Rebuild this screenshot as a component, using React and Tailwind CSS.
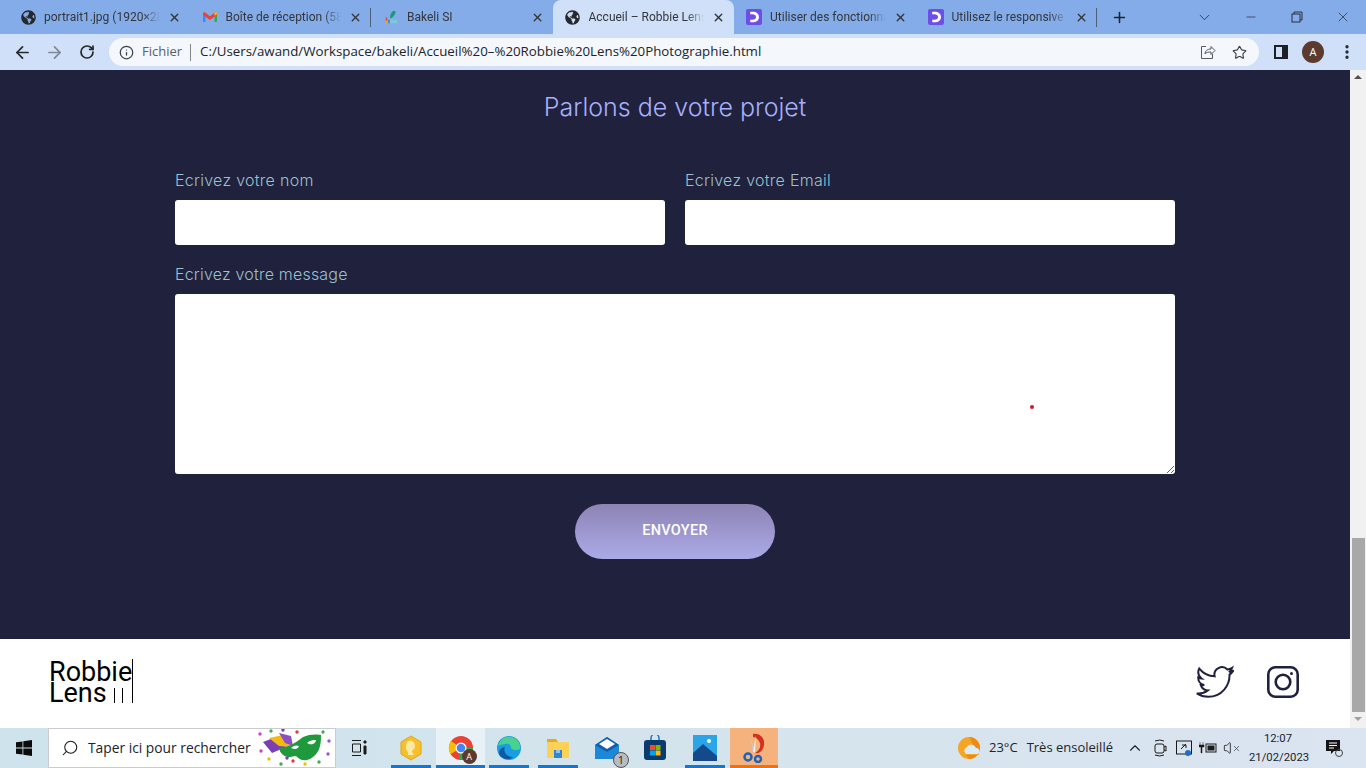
import React from "react";
import {
  ArrowLeft,
  ArrowRight,
  ChevronDown,
  ChevronUp,
  Info,
  Minus,
  MoreVertical,
  Plus,
  RotateCw,
  Search,
  Star,
  Volume,
  X,
} from "lucide-react";
import { FaGlobeAmericas } from "react-icons/fa";

const Dlogo = () => (
  <svg width="16" height="16" viewBox="0 0 16 16">
    <rect width="16" height="16" rx="2" fill="#6d4ee8" />
    <path d="M4 3c5-1.200 9 1 9 5s-4 6.200-9 5l.5-2.500c3 .8 5.500-.2 5.500-2.500S7.500 4.700 4.500 5.500z" fill="#fff" />
  </svg>
);

const Gmail = () => (
  <svg width="16" height="16" viewBox="0 0 16 16">
    <path d="M1 4v9h2.500V7z" fill="#4285f4" />
    <path d="M15 4v9h-2.500V7z" fill="#34a853" />
    <path d="M1 4l1.500-1L8 7.200 13.500 3 15 4v2l-7 5-7-5z" fill="#ea4335" />
    <path d="M12.500 7L15 5V3.500L13.500 3l-1 .8z" fill="#fbbc04" />
  </svg>
);

const Bakeli = () => (
  <svg width="18" height="18" viewBox="0 0 18 18">
    <path d="M8 10c0-4 2-8 5-8 2 0 1 4-1 6s-2 3-4 2z" fill="#1a9a7a" />
    <path d="M3 9c1.500 0 2 1 2 3v2H3z" fill="#e94b3c" />
    <path d="M3 13h2v3H3z" fill="#f5a623" />
    <path d="M6 12h1.500v4H6z" fill="#3b6fd4" />
    <rect x="8" y="12" width="8" height="4" fill="#7fc8d8" />
  </svg>
);

const Globe = () => <FaGlobeAmericas size={15} className="text-[#26282c]" />;

const tabs = [
  { title: "portrait1.jpg (1920×2880)", icon: <Globe /> },
  { title: "Boîte de réception (58)", icon: <Gmail />, sep: true },
  { title: "Bakeli SI", icon: <Bakeli /> },
  { title: "Accueil – Robbie Lens Photographie", icon: <Globe />, active: true },
  { title: "Utiliser des fonctionnalités", icon: <Dlogo /> },
  { title: "Utilisez le responsive design", icon: <Dlogo />, sep: true },
];

const Tab = ({ tab }) => (
  <div
    className={`relative flex items-center w-[181.5px] h-[34px] pl-3 pr-[9px] gap-2 shrink-0 ${
      tab.active ? "bg-[#cfe0f8] rounded-t-lg" : ""
    }`}
  >
    <span className="w-4 h-4 flex items-center justify-center shrink-0">{tab.icon}</span>
    <span className="flex-1 overflow-hidden whitespace-nowrap font-['Roboto',sans-serif] text-xs text-[#33363b] [mask-image:linear-gradient(to_right,black_85%,transparent)]">
      {tab.title}
    </span>
    <X size={13} strokeWidth={2.5} className="text-[#33363b] shrink-0" />
    {tab.sep && <span className="absolute right-0 top-2 w-px h-[19px] bg-[#4f5f78]" />}
  </div>
);

const Chrome = () => (
  <svg width="26" height="26" viewBox="0 0 26 26">
    <circle cx="13" cy="13" r="12" fill="#ea4335" />
    <path d="M13 13L2.600 19A12 12 0 0 1 3 6z" fill="#fbbc04" />
    <path d="M13 13h12a12 12 0 0 1-12 12l-2-1z" fill="#34a853" />
    <circle cx="13" cy="13" r="5.500" fill="#fff" />
    <circle cx="13" cy="13" r="4.300" fill="#4285f4" />
  </svg>
);

const Edge = () => (
  <svg width="26" height="26" viewBox="0 0 26 26">
    <circle cx="13" cy="13" r="12" fill="#1b9de2" />
    <path d="M2 11C4 3 12 0 18 3c5 2 7 8 6 11-3 2-8 1-9-1 0-3-2-5-6-4-3 .5-5 1-7 2z" fill="#48d18f" />
    <path d="M9 12c-2 4 1 10 8 10-4 4-10 2-13-1-2-3-1-8 5-9z" fill="#0c59a4" />
  </svg>
);

const Folder = () => (
  <svg width="24" height="24" viewBox="0 0 24 24">
    <path d="M1 3h9l2 3H1z" fill="#e8a820" />
    <rect x="1" y="6" width="22" height="16" fill="#fbd257" />
    <rect x="8" y="14" width="8" height="8" fill="#2f86d4" />
    <rect x="10" y="14" width="4" height="3" fill="#8cc4f0" />
  </svg>
);

const Mail = () => (
  <div className="relative w-[26px] h-[24px]">
    <svg width="26" height="24" viewBox="0 0 26 24">
      <path d="M1 9l12-8 12 8v14H1z" fill="#1e88d8" />
      <path d="M1 9l12 7 12-7-12-8z" fill="#0f5fae" />
      <path d="M5 8l8-5 8 5-8 5z" fill="#fff" />
    </svg>
    <span className="absolute -right-[9px] -bottom-[8px] w-4 h-4 rounded-full bg-[#b8bcc0] border border-[#555] text-[11px] leading-[14px] text-center text-[#222]">
      1
    </span>
  </div>
);

const Store = () => (
  <svg width="24" height="26" viewBox="0 0 24 26">
    <path d="M8 6V3a4 4 0 0 1 8 0v3" fill="none" stroke="#1c78c8" strokeWidth="1.500" />
    <rect x="1" y="5" width="22" height="20" rx="3" fill="#0d3a6e" />
    <rect x="7" y="10" width="5" height="5" fill="#f25022" />
    <rect x="12.500" y="10" width="5" height="5" fill="#7fba00" />
    <rect x="7" y="15.500" width="5" height="5" fill="#00a4ef" />
    <rect x="12.500" y="15.500" width="5" height="5" fill="#ffb900" />
  </svg>
);

const Photos = () => (
  <svg width="24" height="26" viewBox="0 0 24 26">
    <rect width="24" height="26" fill="#2aa6e8" />
    <path d="M0 26V18l10-9 14 12v5z" fill="#124a8c" />
    <circle cx="16" cy="6" r="2" fill="#fff" />
  </svg>
);

const Snip = () => (
  <svg width="26" height="30" viewBox="0 0 26 30">
    <path d="M12 1c7-1 12 4 11 11s-6 9-9 8c4-2 6-6 5-10-1-3-4-6-7-6z" fill="#d0321e" />
    <path d="M9 4l5 14-2 1z" fill="#c8c8c8" />
    <path d="M15 2l-3 17 2 .5z" fill="#eee" />
    <circle cx="7" cy="24" r="3.500" fill="none" stroke="#1f62b5" strokeWidth="2.500" />
    <circle cx="17" cy="26" r="3" fill="none" stroke="#1f62b5" strokeWidth="2.500" />
  </svg>
);

const Coin = () => (
  <svg width="24" height="26" viewBox="0 0 24 26">
    <path d="M12 1l10 6v12l-10 6-10-6V7z" fill="#f6c02c" stroke="#e6a410" />
    <path d="M8 7c4-3 8 0 8 4s-3 3-3 6l2 3H9c1-3-2-4-2-7 0-2 0-4 1-6z" fill="#fde9a6" />
  </svg>
);

const Mask = () => (
  <svg width="76" height="38" viewBox="0 0 76 38">
    <path d="M6 13l13-5 10 10-14 6z" fill="#7b3fb5" />
    <path d="M12 9l14-3 8 12-12-1z" fill="#f2b90f" />
    <path d="M22 4l12 3 2 10-8-3z" fill="#8d4dc4" />
    <path d="M22 19c8-1 14-3 24-11 6-3 14-3 18-2 0 10-1 18-11 24-7 3-11 0-14-3-4 0-7 2-8 1-5-1-8-4-9-9z" fill="#1e9a3c" />
    <path d="M34 19c3-3 6-3 8-2-1 3-4 4-8 2zM50 14c3-3 6-3 9-3 0 3-4 6-9 3z" fill="#fff" />
    {[
      [3, 5, "#d13fd1"], [14, 2, "#3cb04a"], [26, 1, "#7b3fb5"], [40, 3, "#e53935"],
      [66, 3, "#3cb04a"], [72, 12, "#9b59d0"], [71, 25, "#9b59d0"], [62, 33, "#3cb04a"],
      [48, 35, "#f2b90f"], [36, 32, "#e53935"], [24, 35, "#3cb04a"], [12, 30, "#f2b90f"],
      [4, 22, "#d13fd1"], [30, 29, "#7b3fb5"],
    ].map(([cx, cy, fill]) => (
      <circle key={`${cx}-${cy}`} cx={cx} cy={cy} r="1.700" fill={fill} />
    ))}
  </svg>
);

const Weather = () => (
  <svg width="24" height="28" viewBox="0 0 24 28">
    <circle cx="12" cy="14" r="11" fill="#f5a524" />
    <path d="M12 3a11 11 0 0 1 0 22 8 8 0 0 0-4-4h14" fill="#ee8a16" />
    <path d="M9 20a4 4 0 0 1 1-7 5 5 0 0 1 9 1 3 3 0 0 1 1 6z" fill="#dcebf8" />
  </svg>
);

const TaskTile = ({ children, line, className = "" }) => (
  <div className={`relative h-10 flex items-center justify-center shrink-0 ${className}`}>
    {children}
    {line && <span className={`absolute bottom-0 h-[3px] ${line}`} />}
  </div>
);

const Page = () => (
  <div className="flex-1 flex flex-col min-w-0">
    <main className="flex-1 bg-[#1f213d] pt-5">
      <h2 className="text-center text-[25px] leading-[34px] font-light font-['Inter',sans-serif] text-[#a8b0fa]">
        Parlons de votre projet
      </h2>

      <form className="w-[1000px] mx-auto mt-[44px] font-['Inter',sans-serif]">
        <div className="flex gap-5">
          <div className="flex-1">
            <label className="block text-[16px] leading-[24px] font-light tracking-[0.28px] text-[#9cc0cc] mb-2">
              Ecrivez votre nom
            </label>
            <input type="text" className="block w-full h-[45px] bg-white rounded-[3px]" />
          </div>
          <div className="flex-1">
            <label className="block text-[16px] leading-[24px] font-light tracking-[0.28px] text-[#9cc0cc] mb-2">
              Ecrivez votre Email
            </label>
            <input type="text" className="block w-full h-[45px] bg-white rounded-[3px]" />
          </div>
        </div>

        <label className="block text-[16px] leading-[24px] font-light tracking-[0.2px] text-[#9cc0cc] mt-[17px] mb-2">
          Ecrivez votre message
        </label>
        <div className="relative">
          <textarea className="block w-full h-[180px] bg-white rounded-[3px] outline-none" />
          {/* curseur rouge sur la capture */}
          <span className="absolute left-[855px] top-[111px] w-1 h-1 rounded-full bg-[#e0102f]" />
        </div>

        <div className="flex justify-center mt-[30px]">
          <button
            type="button"
            className="w-[200px] h-[55px] pb-px rounded-full bg-gradient-to-b from-[#8e84b4] to-[#abaae8] text-white text-[14.5px] tracking-[0.3px] font-medium font-['Roboto',sans-serif]"
          >
            ENVOYER
          </button>
        </div>
      </form>
    </main>

    <footer className="h-[89px] bg-white flex items-start justify-between pl-[49px] pr-[51px] shrink-0">
      <div className="relative w-[84px] h-[42px] mt-[23px] font-['Roboto',sans-serif] text-[27px] leading-[21px] text-black">
        <div>Robbie</div>
        <div>Lens</div>
        <span className="absolute left-[83px] -top-[3px] w-px h-[44px] bg-black" />
        <span className="absolute left-[65px] top-[26px] w-px h-[15px] bg-black" />
        <span className="absolute left-[73px] top-[26px] w-px h-[15px] bg-black" />
      </div>
      <div className="flex items-center gap-[33px] mt-[24px]">
        <svg width="38" height="38" viewBox="-0.500 -0.500 25 25" fill="none" stroke="#1f213d" strokeWidth="1.300">
          <path d="M23.953 4.570a10 10 0 01-2.825.775 4.958 4.958 0 002.163-2.723c-.951.555-2.005.959-3.127 1.184a4.920 4.920 0 00-8.384 4.482C7.690 8.095 4.067 6.130 1.640 3.162a4.822 4.822 0 00-.666 2.475c0 1.710.870 3.213 2.188 4.096a4.904 4.904 0 01-2.228-.616v.060a4.923 4.923 0 003.946 4.827 4.996 4.996 0 01-2.212.085 4.936 4.936 0 004.604 3.417 9.867 9.867 0 01-6.102 2.105c-.390 0-.779-.023-1.170-.067a13.995 13.995 0 007.557 2.209c9.053 0 13.998-7.496 13.998-13.985 0-.210 0-.420-.015-.630A9.935 9.935 0 0024 4.590z" />
        </svg>
        <svg width="32" height="32" viewBox="0 0 32 32" fill="none" stroke="#1f213d" strokeWidth="2.600">
          <rect x="1.300" y="1.300" width="29.400" height="29.400" rx="7" />
          <circle cx="16" cy="16" r="7.300" />
          <circle cx="24.500" cy="7.500" r="1.500" fill="#1f213d" stroke="none" />
        </svg>
      </div>
    </footer>
  </div>
);

const App = () => {
  return (
    <div className="w-[1366px] h-screen flex flex-col overflow-hidden font-['Open_Sans',sans-serif]">
      {/* tabs */}
      <div className="h-[34px] bg-[#84ace9] flex items-center pl-[8px] shrink-0">
        {tabs.map((t) => (
          <Tab key={t.title} tab={t} />
        ))}
        <Plus size={17} strokeWidth={2.2} className="ml-[14px] text-[#1d2430]" />
        <div className="ml-auto flex items-center text-[#2a2f38]">
          <ChevronDown size={17} strokeWidth={1.2} className="mr-[31px]" />
          <Minus size={14} strokeWidth={1.2} className="mr-[33px]" />
          <svg width="12" height="12" viewBox="0 0 12 12" fill="none" stroke="currentColor" className="mr-[32px]">
            <rect x="1" y="3" width="8" height="8" />
            <path d="M3 3V1h8v8H9" />
          </svg>
          <X size={16} strokeWidth={1.1} className="mr-[15px]" />
        </div>
      </div>

      {/* toolbar */}
      <div className="h-[36px] bg-[#cfe0f8] flex items-center shrink-0">
        <ArrowLeft size={19} strokeWidth={2.2} className="ml-[13px] text-[#26282c]" />
        <ArrowRight size={19} strokeWidth={2.2} className="ml-[13px] text-[#7d8898]" />
        <RotateCw size={16} strokeWidth={2.6} className="ml-[15px] text-[#26282c]" />
        <div className="ml-[14px] w-[1150px] h-7 bg-[#f4f8fd] rounded-full flex items-center pl-[10px] pr-[9px] text-[13px]">
          <Info size={15} className="text-[#3c4148]" />
          <span className="ml-2 text-[#5a5f66]">Fichier</span>
          <span className="ml-[8px] w-px h-[17px] bg-[#80868c]" />
          <span className="ml-[9px] text-[13.3px] text-[#20242a] whitespace-nowrap">
            C:/Users/awand/Workspace/bakeli/Accueil%20–%20Robbie%20Lens%20Photographie.html
          </span>
          <svg width="16" height="16" viewBox="0 0 16 16" fill="none" stroke="#555a62" className="ml-auto mr-[16px]">
            <path d="M6 2.500H1.500v12h11V10" />
            <path d="M5 10c0-3 2.500-5 6-5V2.500L15 6.500l-4 4V8c-3 0-5 .5-6 2z" />
          </svg>
          <Star size={15} strokeWidth={1.8} className="mr-[3px] text-[#3a3f46]" />
        </div>
        <svg width="14" height="14" viewBox="0 0 14 14" className="ml-[15px]">
          <rect x="1" y="1" width="12" height="12" fill="none" stroke="#1d2026" strokeWidth="2" />
          <rect x="8" y="1" width="5" height="12" fill="#1d2026" />
        </svg>
        <span className="ml-[14px] w-[22px] h-[22px] rounded-full bg-[#5c3a2e] text-white text-[11px] leading-[22px] text-center">
          A
        </span>
        <MoreVertical size={18} strokeWidth={2.4} className="ml-[14px] text-[#26282c]" />
      </div>

      {/* page + scrollbar */}
      <div className="flex-1 flex min-h-0">
        <Page />
        <div className="relative w-4 bg-[#f1f1f1] flex flex-col items-center shrink-0">
          <span className="mt-[5px] w-0 h-0 border-x-[4px] border-x-transparent border-b-[4px] border-b-[#505050]" />
          <span className="mt-auto w-[13px] h-[174px] bg-[#a8a8a8]" />
          <span className="mt-[5px] mb-[7px] w-0 h-0 border-x-[4px] border-x-transparent border-t-[4px] border-t-[#a0a0a0]" />
        </div>
      </div>

      {/* taskbar */}
      <div className="h-10 bg-gradient-to-r from-[#cee3ec] via-[#d4e4ec] to-[#dbe4f1] flex items-center shrink-0 text-[#20242a]">
        <svg width="16" height="16" viewBox="0 0 16 16" fill="#0c0c0c" className="ml-4">
          <path d="M0 2.300l6.500-.9v6.200H0zM7.300 1.300L16 0v7.600H7.300zM0 8.400h6.500v6.200L0 13.700zM7.300 8.400H16V16l-8.700-1.200z" />
        </svg>
        <div className="ml-4 w-[288px] h-10 bg-white border border-[#c9ccd0] flex items-center pl-3 shrink-0">
          <Search size={18} strokeWidth={1.4} className="-scale-x-100 text-[#1a1a1a]" />
          <span className="ml-[9px] text-[13.8px] whitespace-nowrap">Taper ici pour rechercher</span>
          <span className="ml-[6px]"><Mask /></span>
        </div>
        <svg width="16" height="16" viewBox="0 0 16 16" fill="none" stroke="#1a1a1a" className="ml-[15px]">
          <path d="M1 .5h9M1 15.500h9M1.500 4h8v8h-8z" />
          <path d="M13 1h2v2h-2zM13 6h2v8h-2z" fill="#1a1a1a" />
        </svg>
        <TaskTile className="ml-[24px] w-[40px]" line="inset-x-0 bg-[#0f78d4]"><Coin /></TaskTile>
        <TaskTile className="ml-[5px] w-[49px] bg-[#e8f2f6]" line="inset-x-0 bg-[#0f78d4]">
          <div className="relative">
            <Chrome />
            <span className="absolute -right-[3px] -bottom-[3px] w-[15px] h-[15px] rounded-full bg-[#5c3a2e] text-white text-[9px] leading-[15px] text-center">A</span>
          </div>
        </TaskTile>
        <TaskTile className="ml-[4px] w-[40px]" line="inset-x-0 bg-[#0f78d4]"><Edge /></TaskTile>
        <TaskTile className="ml-[9px] w-[40px]" line="inset-x-0 bg-[#0f78d4]"><Folder /></TaskTile>
        <TaskTile className="ml-[9px] w-[40px]"><Mail /></TaskTile>
        <TaskTile className="ml-[8px] w-[40px]"><Store /></TaskTile>
        <TaskTile className="ml-[10px] w-[40px]" line="inset-x-0 bg-[#0f78d4]"><Photos /></TaskTile>
        <TaskTile className="ml-[5px] w-[48px] bg-[#f6b27c]" line="inset-x-0 bg-[#f0700f]"><Snip /></TaskTile>

        <div className="ml-auto flex items-center">
          <Weather />
          <span className="ml-[8px] text-[13px] whitespace-nowrap">23°C</span>
          <span className="ml-[9px] text-[13px] whitespace-nowrap">Très ensoleillé</span>
          <ChevronUp size={18} strokeWidth={1.5} className="ml-[13px]" />
          <svg width="14" height="18" viewBox="0 0 14 18" fill="none" stroke="#1a1a1a" className="ml-[9px]">
            <rect x="2" y="5" width="9" height="9" rx="2" />
            <path d="M2 2q5-2 9 0M2 16q5 2 9 0M11 8l2-1v5l-2-1" />
          </svg>
          <svg width="18" height="18" viewBox="0 0 18 18" fill="none" stroke="#1a1a1a" className="ml-[8px]">
            <rect x="1.500" y="2" width="15" height="13" />
            <path d="M6 10l5-5M7 6h4v3" />
            <circle cx="13" cy="14" r="3" fill="#1f6fc4" stroke="none" />
          </svg>
          <svg width="18" height="14" viewBox="0 0 18 14" className="ml-[6px]">
            <rect x="7" y="3" width="10" height="8" fill="none" stroke="#1a1a1a" />
            <rect x="8.500" y="4.500" width="7" height="5" fill="#1a1a1a" />
            <path d="M1 1v3M4 1v3M0 4h5v2H3v6H2V6H0z" fill="#1a1a1a" stroke="#1a1a1a" strokeWidth=".5" />
          </svg>
          <Volume size={16} strokeWidth={1.3} className="ml-[6px]" />
          <X size={9} strokeWidth={1.6} className="-ml-[7px]" />
          <div className="ml-[8px] w-[58px] text-center font-['Roboto',sans-serif] text-[11.3px] leading-[19px] whitespace-nowrap">
            <div>12:07</div>
            <div>21/02/2023</div>
          </div>
          <svg width="18" height="18" viewBox="0 0 18 18" className="ml-[18px] mr-[23px]">
            <path d="M1 1h14v11H9l-3 3v-3H1z" fill="#151515" />
            <path d="M4 4h8M4 6.500h8M4 9h5" stroke="#fff" />
            <circle cx="14" cy="14" r="3.500" fill="none" stroke="#444" />
          </svg>
        </div>
      </div>
    </div>
  );
};

export default App;
